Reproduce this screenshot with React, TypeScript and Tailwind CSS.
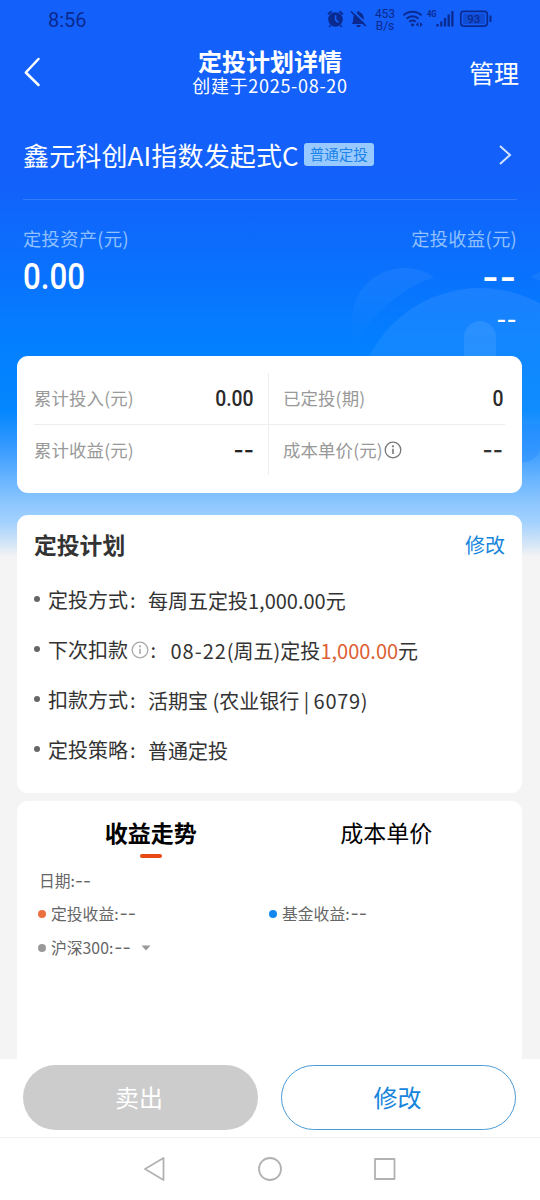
import type { ReactNode } from 'react';

const INK = '#0b2a8f';

const StatusIcons = () => (
  <svg width="170" height="34" viewBox="324 4 170 34" fill="none" stroke={INK}>
    {/* alarm */}
    <circle cx="335.5" cy="20.5" r="7.3" fill={INK} stroke="none" />
    <path d="M328 15.2l3.6-3M343 15.2l-3.6-3M330.5 26.5l-1.3 1.4M340.5 26.5l1.3 1.4" strokeWidth="1.8" />
    <path d="M335.6 16.2v4.6l2.8 2.6" stroke="#1463fa" strokeWidth="1.5" />
    {/* muted bell */}
    <path d="M351.5 25c1.500-1.200 1.700-2.600 1.700-5 0-3.800 1.600-6.300 4.600-6.800V12h1.400v1.200c3 .5 4.600 3 4.600 6.800 0 2.400.2 3.800 1.700 5zM356.300 26h4.400a2.200 2.200 0 0 1-4.400 0z" fill={INK} stroke="none" />
    <path d="M352.500 11.500l14.500 14" stroke="#1463fa" strokeWidth="1.800" />
    <path d="M351 12.500l14.800 14.500" strokeWidth="1.700" />
    {/* wifi */}
    <path d="M403.500 16.200a13.200 13.200 0 0 1 18 0M406.500 19.700a8.700 8.700 0 0 1 12 0M409.300 22.800a4.800 4.800 0 0 1 6.400 0" strokeWidth="2" />
    <circle cx="412.500" cy="25.800" r="1.600" fill={INK} stroke="none" />
    <path d="M418.500 23v5l-2.700-2.500zM420 23v5l2.700-2.500z" fill={INK} stroke="none" />
    {/* signal */}
    <path d="M437.500 27.500v-2.500M441.300 27.500v-5M445 27.500v-8.500M448.700 27.500v-12M452.400 27.500v-15.500" strokeWidth="2.300" />
    {/* battery */}
    <rect x="460.800" y="12.300" width="26.500" height="14.800" rx="3" strokeWidth="1.700" />
    <rect x="463" y="14.500" width="22" height="10.500" rx="1.500" fill={INK} fillOpacity=".35" stroke="none" />
    <path d="M490.500 16.500v6.500" strokeWidth="2" />
    <text x="473.700" y="24" fontSize="11.500" fontWeight="500" textAnchor="middle" fill={INK} stroke="none" fontFamily="Roboto">93</text>
    <text x="427" y="18.300" fontSize="9.500" fontWeight="700" textLength="9.500" lengthAdjust="spacingAndGlyphs" fill={INK} stroke="none" fontFamily="Roboto">4G</text>
  </svg>
);

const HeroArt = () => (
  <svg className="absolute left-0 top-0" width="540" height="560" viewBox="0 0 540 560">
    <defs>
      <linearGradient id="ear" x1="0" y1="0" x2="0" y2="1">
        <stop offset="0" stopColor="#fff" stopOpacity=".06" />
        <stop offset="1" stopColor="#fff" stopOpacity="0" />
      </linearGradient>
      <linearGradient id="face" x1="0" y1="0" x2="0" y2="1">
        <stop offset="0" stopColor="#fff" stopOpacity=".08" />
        <stop offset=".6" stopColor="#fff" stopOpacity=".05" />
      </linearGradient>
    </defs>
    <path d="M434 277A52.500 52.500 0 0 0 357 343A142 142 0 0 1 434 277Z" fill="url(#ear)" />
    <path d="M531 277A52.500 52.500 0 0 1 608 343A142 142 0 0 0 531 277Z" fill="url(#ear)" />
    <path d="M356 412A124 124 0 0 1 604 412V424H356Z" fill="url(#face)" />
    <path d="M464 360V337a16 16 0 0 1 32 0V360Z" fill="#fff" fillOpacity=".09" />
    <path d="M500 424H540V446A16 16 0 0 1 524 462H500Z" fill="#2a90ff" fillOpacity=".5" />
  </svg>
);

const InfoIcon = ({ color, className }: { color: string; className?: string }) => (
  <svg className={className} width="18" height="18" viewBox="0 0 18 18" fill="none" stroke={color}>
    <circle cx="9" cy="9" r="7.800" strokeWidth="1.300" />
    <path d="M9 7.800v5.200" strokeWidth="1.600" />
    <circle cx="9" cy="5.300" r="1.100" fill={color} stroke="none" />
  </svg>
);

// Empty values are shown as a pair of wide dashes
const Dashes = ({ className }: { className: string }) => (
  <span className={`font-['Inter',sans-serif] ${className}`}>--</span>
);

const StatCell = ({ label, children, className }: { label: ReactNode; children: ReactNode; className: string }) => (
  <div className={`flex items-center justify-between ${className}`}>
    <span className="flex items-center text-[17.400px] tracking-[0.15px] text-[#999]">{label}</span>
    {children}
  </div>
);

const statNumber = "inline-block origin-right scale-x-[0.88] pt-[1px] font-['Roboto',sans-serif] text-[22px] font-medium text-[#2a2a2a]";

const PlanRow = ({ label, info, children }: { label: string; info?: boolean; children: ReactNode }) => (
  <li className="flex h-[50px] items-center text-[20px] text-[#333]">
    <span className="mr-2 size-[6px] rounded-full bg-[#666]" />
    <span className="flex items-center pt-px">
      {label}
      {info && <InfoIcon color="#aaa" className="ml-[2.500px]" />}
      <span className="ml-[2px] w-[18px]">:</span>
    </span>
    <span className={`relative top-[2px] whitespace-pre ${info ? 'ml-[2px]' : ''}`}>{children}</span>
  </li>
);

const Legend = ({ dot, children }: { dot: string; children: ReactNode }) => (
  <div className="flex w-[231px] items-center">
    <span className={`mr-[5px] size-2 rounded-full ${dot}`} />
    {children}
  </div>
);

const App = () => {
  return (
    <div className="relative flex h-[1200px] w-[540px] flex-col overflow-hidden bg-[#f4f4f4] font-['Noto_Sans_CJK_SC',sans-serif] leading-none">
      <div className="absolute inset-x-0 top-0 h-[560px] bg-[linear-gradient(180deg,#1360fa_0px,#1360fa_175px,#0a70fd_265px,#0380ff_345px,#0386fe_410px,#3a9cfe_450px,#6fb8ff_483px,#8cc6fe_502px,#a2d1fe_522px,#cbe2f8_540px,#f4f4f4_557px)]" />
      <HeroArt />

      <div className="relative flex h-10 items-center pl-12" style={{ color: INK }}>
        <span className="w-[276px] font-['Roboto',sans-serif] text-[20px]">8:56</span>
        <div className="relative h-[34px]">
          <StatusIcons />
          <div className="absolute left-[50px] top-[5px] w-[22px] text-center font-['Roboto',sans-serif] text-[12px] leading-[12px]">
            453
            <br />
            B/s
          </div>
        </div>
      </div>

      <header className="relative flex h-[64px] items-center justify-between pl-6 pr-[21px] text-white">
        <svg width="50" height="30" viewBox="0 0 50 30" fill="none" stroke="#fff" strokeWidth="2.500">
          <path d="M14.500 2L1.800 15.500L14.500 28" strokeLinecap="round" strokeLinejoin="round" />
        </svg>
        <div className="flex-1 pr-[3px] text-center">
          <h1 className="text-[24px] font-bold leading-[26px]">定投计划详情</h1>
          <p className="text-[18px] leading-[22px] tracking-[0.700px]">创建于2025-08-20</p>
        </div>
        <button className="text-[25px]">管理</button>
      </header>

      <section className="relative h-[251px] px-[23px] text-white">
        <div className="flex h-[96px] items-center border-b border-white/15 pt-[6px]">
          <span className="text-[26px] tracking-[0.150px]">鑫元科创AI指数发起式C</span>
          <span className="ml-[5px] flex h-[23px] w-[70px] items-center justify-center rounded-[3px] bg-[#98caff] text-[14.500px] text-[#1a82e8]">
            普通定投
          </span>
          <svg className="ml-auto mr-[5px]" width="14" height="20" viewBox="0 0 14 20" fill="none" stroke="#d3e3ff" strokeWidth="2">
            <path d="M2 1l10 9-10 9" />
          </svg>
        </div>
        <div className="flex justify-between pt-[28px] text-[18.300px] leading-[20px] tracking-[0.300px] text-[#90c0ff]">
          <span>定投资产(元)</span>
          <span>定投收益(元)</span>
        </div>
        <div className="flex h-[58px] items-center justify-between">
          <span className="inline-block origin-left scale-x-[0.87] font-['Roboto',sans-serif] text-[36px] font-medium">0.00</span>
          <Dashes className="text-[36px] font-semibold tracking-[0.700px]" />
        </div>
        <div className="-mt-[5px] flex h-[36px] items-center justify-end">
          <Dashes className="text-[21px] font-semibold tracking-[0.500px]" />
        </div>
      </section>

      <section className="relative mx-[17px] mr-[18px] mt-[0.500px] h-[137.500px] rounded-[11px] bg-white px-[17px] pt-[17px]">
        <div className="grid grid-cols-[235px_1fr] grid-rows-[52px_50.500px]">
          <StatCell label="累计投入(元)" className="border-b border-r border-[#eee] pr-[14px]">
            <span className={statNumber}>0.00</span>
          </StatCell>
          <StatCell label="已定投(期)" className="border-b border-[#eee] pl-[14px] pr-[1px]">
            <span className={statNumber}>0</span>
          </StatCell>
          <StatCell label="累计收益(元)" className="border-r border-[#eee] pr-[14px]">
            <Dashes className="text-[22px] font-semibold text-[#222]" />
          </StatCell>
          <StatCell
            label={
              <>
                成本单价(元)
                <InfoIcon color="#777" className="ml-px" />
              </>
            }
            className="pl-[14px] pr-[2px]"
          >
            <Dashes className="text-[22px] font-semibold text-[#333]" />
          </StatCell>
        </div>
      </section>

      <section className="relative ml-[17px] mr-[18px] mt-[22px] h-[278px] rounded-[11px] bg-white px-[17px] pt-[10px]">
        <div className="flex h-10 items-center justify-between">
          <h2 className="pt-px text-[22.800px] font-bold text-[#333]">定投计划</h2>
          <button className="text-[20px] text-[#1785dc]">修改</button>
        </div>
        <ul className="pt-[9px]">
          <PlanRow label="定投方式">每周五定投1,000.00元</PlanRow>
          <PlanRow label="下次扣款" info>
            <span className="tracking-[1px]">08-22</span>(周五)定投<span className="text-[#dd6032]">1,000.00</span>元
          </PlanRow>
          <PlanRow label="扣款方式">
            活期宝 (农业银行 | <span className="tracking-[0.700px]">6079)</span>
          </PlanRow>
          <PlanRow label="定投策略">普通定投</PlanRow>
        </ul>
      </section>

      <section className="relative ml-[17px] mr-[18px] mt-2 flex-1 rounded-t-[11px] bg-white">
        <div className="grid grid-cols-2 pl-4 pr-[18px] pt-[18px] text-[23px] leading-[26px] text-black">
          <div className="flex flex-col items-center">
            <span className="font-bold">收益走势</span>
            <span className="mt-[9px] h-1 w-[22px] rounded-full bg-[#e84a14]" />
          </div>
          <div className="text-center">成本单价</div>
        </div>
        <div className="px-[21px] pt-[13px] text-[15.800px] leading-[20px] text-[#666]">
          <div className="pl-[1px]">
            日期:<Dashes className="text-[17.500px]" />
          </div>
          <div className="mt-[13px] flex">
            <Legend dot="bg-[#ec6f3e]">
              定投收益:<Dashes className="ml-px text-[18px]" />
            </Legend>
            <Legend dot="bg-[#1187f0]">
              基金收益:<Dashes className="ml-px text-[18px]" />
            </Legend>
          </div>
          <div className="mt-[14px] flex">
            <Legend dot="bg-[#999]">
              沪深300:<Dashes className="ml-px text-[18px]" />
              <svg className="ml-[10px]" width="10" height="6" viewBox="0 0 10 6" fill="#999">
                <path d="M.5.500h9L5 5.500z" />
              </svg>
            </Legend>
          </div>
        </div>
      </section>

      <footer className="relative flex h-[79px] gap-[23px] border-b border-[#f3f3f3] bg-white px-[23px] pt-[6px] text-[24px]">
        <button className="h-[65px] w-[235px] rounded-full bg-[#ccc] pb-px pr-[3px] text-white">卖出</button>
        <button className="h-[65px] w-[235px] rounded-full border border-[#4a9cd6] pb-px pr-[2px] text-[#1785dc]">修改</button>
      </footer>

      <nav className="relative flex h-[62px] items-center justify-center bg-white">
        <svg width="260" height="28" viewBox="140 1155 260 28" fill="none" stroke="#b2b2b2" strokeWidth="1.800" strokeLinejoin="round">
          <path d="M163.500 1158v22L145 1169z" />
          <circle cx="270" cy="1169" r="11" />
          <rect x="375" y="1159" width="19.500" height="20" />
        </svg>
      </nav>
    </div>
  );
};

export default App;
